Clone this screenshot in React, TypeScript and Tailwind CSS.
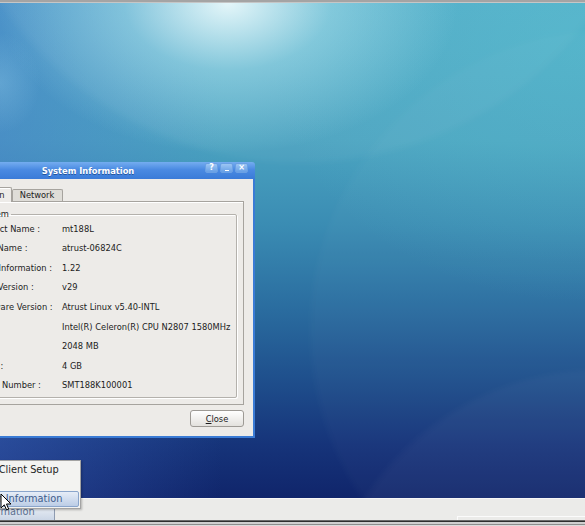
import type { ReactNode } from 'react'

const rows: [string, string][] = [
  ['Product Name :', 'mt188L'],
  ['Host Name :', 'atrust-06824C'],
  ['BIOS Information :', '1.22'],
  ['Boot Version :', 'v29'],
  ['Firmware Version :', 'Atrust Linux v5.40-INTL'],
  ['CPU :', 'Intel(R) Celeron(R) CPU N2807 1580MHz'],
  ['RAM :', '2048 MB'],
  ['Flash :', '4 GB'],
  ['Serial Number :', 'SMT188K100001'],
]

function TitleButton({ children }: { children: ReactNode }) {
  return (
    <div className="flex h-[10px] w-[13px] items-center justify-center rounded-[2px] border border-[#6aa0e4] bg-[linear-gradient(180deg,#9cc6f3,#669fe6)] text-[8px] font-bold leading-none text-white">
      {children}
    </div>
  )
}

function Desktop() {
  return (
    <div className="relative h-[495px] overflow-hidden bg-[linear-gradient(180deg,#4ea8c6_0%,#4aa2c0_28%,#3a8cb3_45%,#2a6c9f_62%,#1e4d8b_77%,#16347a_89%,#10256b_100%)]">
      <div className="absolute inset-0 bg-[linear-gradient(90deg,rgba(72,112,205,0.38)_0%,rgba(72,112,205,0)_38%)]" />
      <div className="absolute inset-0 bg-[radial-gradient(ellipse_320px_260px_at_585px_40px,rgba(90,205,212,0.35),rgba(90,205,212,0))]" />
      <div className="absolute left-[-60px] top-[-560px] h-[720px] w-[720px] rounded-full bg-white/[0.04] blur-[3px]" />
      <div className="absolute left-[310px] top-[27px] h-[600px] w-[600px] rounded-full bg-white/[0.025] blur-[3px]" />
      <div className="absolute left-[320px] top-[367px] h-[560px] w-[560px] rounded-full bg-white/[0.03] blur-[3px]" />
      <div className="absolute inset-0 bg-[radial-gradient(ellipse_230px_150px_at_228px_0px,rgba(236,250,252,0.95)_0%,rgba(175,228,238,0.5)_45%,rgba(120,200,220,0)_100%)]" />
      <div className="absolute inset-0 bg-[radial-gradient(ellipse_40px_50px_at_0px_80px,rgba(140,200,230,0.35),rgba(140,200,230,0))]" />
    </div>
  )
}

function InfoWindow() {
  return (
    <div className="absolute left-[-79px] top-[162px] z-10 w-[334px] text-[8.3px] text-[#1c1c1c]">
      <div className="grid h-[17px] grid-cols-[56px_1fr_56px] rounded-t-[3px] bg-[linear-gradient(180deg,#74adf0_0%,#4a8ae2_45%,#3a7bd8_100%)]">
        <div />
        <div className="flex items-center justify-center pt-px font-bold text-white [text-shadow:0_1px_0_#24559e]">
          System Information
        </div>
        <div className="flex gap-[2px] pl-[6px] pt-[1px]">
          <TitleButton>?</TitleButton>
          <TitleButton>
            <span className="mt-[5px] block h-[1.5px] w-[4px] bg-white" />
          </TitleButton>
          <TitleButton>×</TitleButton>
        </div>
      </div>
      <div className="border-x-2 border-b-2 border-[#3a7bd5] bg-[#edebe8] pb-[9px] pl-[36px] pr-[9px] pt-[8px]">
        <div className="flex h-[14px] items-end pl-[2px]">
          <div className="relative z-10 -mb-px flex h-[15px] items-center rounded-t-[2px] border-x border-t border-[#a6a39e] bg-[#edebe8] pl-[12px] pr-[6px] shadow-[inset_1px_1px_0_#ffffff]">
            Version
          </div>
          <div className="flex h-[12px] w-[51px] items-center justify-center rounded-t-[2px] border-x border-t border-[#a6a39e] bg-[#dfddd8]">
            Network
          </div>
        </div>
        <div className="border border-[#a6a39e] pb-[6px] pl-[7px] pr-[6px] pt-[7px] shadow-[inset_1px_1px_0_#ffffff]">
          <fieldset className="rounded-[2px] border border-[#b4b1ac] pb-[2px] pl-[8px] shadow-[inset_1px_1px_0_#ffffff,1px_1px_0_#ffffff]">
            <legend className="px-[2px] leading-[10px]">System</legend>
            {rows.map(([label, value]) => (
              <div key={label} className="grid h-[19.6px] grid-cols-[86px_1fr] items-center whitespace-nowrap">
                <span>{label}</span>
                <span>{value}</span>
              </div>
            ))}
          </fieldset>
        </div>
        <div className="flex justify-end pt-[5px]">
          <button className="h-[17px] w-[54px] rounded-[3px] border border-[#9d9a95] bg-[linear-gradient(180deg,#ffffff,#e3e1dd)] leading-none">
            <span className="underline">C</span>lose
          </button>
        </div>
      </div>
    </div>
  )
}

function StartMenu() {
  return (
    <div className="absolute left-[-42px] top-[460px] z-20 w-[123px] border border-[#a3a3a3] bg-[#f3f3f1] pb-px text-[9.8px] text-[#1f1f1f] shadow-[1px_1px_2px_rgba(0,0,0,0.25)]">
      <div className="flex h-[19px] items-center whitespace-nowrap pl-[7px]">Atrust Client Setup</div>
      <div className="h-[11px]" />
      <div className="mx-px flex h-[16px] items-center whitespace-nowrap rounded-[2px] border border-[#8aa5cb] bg-[linear-gradient(180deg,#e6edf7,#bccde6)] pl-[5px] text-[#3f5d8c]">
        System Information
      </div>
    </div>
  )
}

function Cursor() {
  return (
    <svg className="absolute left-0 top-[493px] z-30" width="12" height="19" viewBox="0 0 12 19">
      <path d="M1 1 L1 15 L4.3 11.8 L6.6 17 L8.7 16.1 L6.5 11 L11 11 Z" fill="#ffffff" stroke="#000000" strokeWidth="1" strokeLinejoin="round" />
    </svg>
  )
}

export default function App() {
  return (
    <div className="relative flex h-[526px] w-[585px] flex-col overflow-hidden font-['DejaVu_Sans',sans-serif]">
      <div className="h-[3px] border-b border-[#c6c6c6] bg-[#a4a4a4]" />
      <Desktop />
      <div className="flex h-[22px] items-end border-t border-[#f7f7f6] bg-[#ebebe9]">
        <div className="-ml-[22px] flex h-[17px] w-[77px] items-center whitespace-nowrap border-r border-t border-[#8e9bb0] bg-[linear-gradient(180deg,#eef2f7,#cbd6e6)] text-[9.8px] text-[#5a6f90]">
          Information
        </div>
        <div className="ml-auto h-[4px] w-[128px] border-l border-t border-[#fbfbfb]" />
      </div>
      <div className="flex h-[6px] flex-col">
        <div className="h-px bg-[#6b6b6b]" />
        <div className="h-px bg-[#2e2e2e]" />
        <div className="h-[2px] bg-[#cfcfcf]" />
        <div className="h-px bg-[#8d8d8d]" />
        <div className="h-px bg-[#dcdcdc]" />
      </div>
      <InfoWindow />
      <StartMenu />
      <Cursor />
    </div>
  )
}
